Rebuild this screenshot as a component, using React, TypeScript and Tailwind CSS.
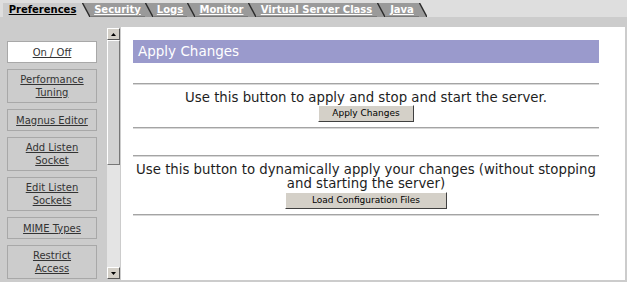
const tabs = [
  { label: "Preferences", width: 79, z: "z-60", active: true },
  { label: "Security", width: 63, z: "z-50", active: false },
  { label: "Logs", width: 42, z: "z-40", active: false },
  { label: "Monitor", width: 61, z: "z-30", active: false },
  { label: "Virtual Server Class", width: 129, z: "z-20", active: false },
  { label: "Java", width: 42, z: "z-10", active: false },
];

const menu = [
  { label: ["On / Off"], selected: true },
  { label: ["Performance", "Tuning"] },
  { label: ["Magnus Editor"] },
  { label: ["Add Listen", "Socket"] },
  { label: ["Edit Listen", "Sockets"] },
  { label: ["MIME Types"] },
  { label: ["Restrict", "Access"] },
];

function Tab({
  label,
  width,
  z,
  active,
  first,
}: {
  label: string;
  width: number;
  z: string;
  active: boolean;
  first: boolean;
}) {
  const fill = active ? "#cccccc" : "#9a9a9a";
  return (
    <div className={`relative ${z} flex h-[14px] ${first ? "" : "-ml-[8px]"}`}>
      <div
        className={`flex h-full items-center justify-center text-[10px] font-bold underline leading-none ${
          active
            ? "bg-[#cccccc] text-black"
            : "bg-[#9a9a9a] text-white border-b border-[#7a7a7a]"
        } ${first ? "" : "pl-[8px]"}`}
        style={{ width }}
      >
        {label}
      </div>
      <svg width="8" height="14" viewBox="0 0 8 14" className="block">
        <polygon points="0,0 0.5,0 8,14 0,14" fill={fill} />
        <line x1="0.5" y1="0" x2="8" y2="14" stroke="#2a2a2a" strokeWidth="1.4" />
      </svg>
    </div>
  );
}

function Rule() {
  return <div className="h-[2px] bg-[#a4a4a4] border-b border-[#d8d8d8]" />;
}

function Button({ label, width }: { label: string; width: number }) {
  return (
    <div className="flex justify-center">
      <div
        className="h-[17px] flex items-center justify-center bg-[#d4d0c8] border border-t-white border-l-white border-r-[#404040] border-b-[#404040] text-[9px] text-black leading-none"
        style={{ width }}
      >
        {label}
      </div>
    </div>
  );
}

export default function App() {
  return (
    <div
      className="w-[627px] h-[282px] overflow-hidden bg-[#cccccc] flex flex-col"
      style={{ fontFamily: '"DejaVu Sans", Verdana, sans-serif' }}
    >
      {/* tab strip */}
      <div className="h-[17px] bg-[#dedede] flex items-end pl-[3px]">
        {tabs.map((t, i) => (
          <Tab key={t.label} {...t} first={i === 0} />
        ))}
      </div>

      <div className="flex-1 flex pt-[10px] pb-[2px] pr-[2px]">
        {/* left menu */}
        <div className="w-[107px] flex flex-col gap-[6px] pl-[7px] pt-[14px]">
          {menu.map((m) => (
            <div
              key={m.label.join(" ")}
              className={`w-[90px] ${
                m.label.length > 1 ? "h-[34px]" : "h-[22px]"
              } flex flex-col items-center justify-center border border-[#a8a8a8] text-[10px] leading-[13px] text-[#333] underline ${
                m.selected ? "bg-white" : "bg-[#cccccc]"
              }`}
            >
              {m.label.map((l) => (
                <span key={l}>{l}</span>
              ))}
            </div>
          ))}
        </div>

        {/* scrollbar */}
        <div className="w-[13px] flex flex-col pt-[1px] pb-[1px]">
          <div className="h-[12px] bg-[#d4d0c8] border border-t-white border-l-white border-r-[#555] border-b-[#555] flex items-center justify-center">
            <svg width="5" height="3" viewBox="0 0 5 3">
              <polygon points="2.5,0 5,3 0,3" fill="#000" />
            </svg>
          </div>
          <div className="h-[125px] bg-[#d2d2d2] border border-t-white border-l-white border-r-[#777] border-b-[#777]" />
          <div className="flex-1 bg-[#e4e4e4]" />
          <div className="h-[12px] bg-[#d4d0c8] border border-t-white border-l-white border-r-[#555] border-b-[#555] flex items-center justify-center">
            <svg width="5" height="3" viewBox="0 0 5 3">
              <polygon points="0,0 5,0 2.5,3" fill="#000" />
            </svg>
          </div>
        </div>

        {/* main frame */}
        <div className="ml-[1px] flex-1 bg-white pl-[12px] pr-[26px] pt-[13px] text-[#1e1e1e]">
          <div className="h-[23px] bg-[#9a9acc] text-white text-[13.5px] flex items-center pl-[5px]">
            Apply Changes
          </div>

          <div className="mt-[20px]">
            <Rule />
          </div>
          <div className="pt-[6px] text-center text-[13.3px] leading-[14px]">
            Use this button to apply and stop and start the server.
          </div>
          <Button label="Apply Changes" width={96} />
          <div className="mt-[5px]">
            <Rule />
          </div>

          <div className="mt-[26px]">
            <Rule />
          </div>
          <div className="pt-[6px] text-center text-[13.3px] leading-[14px]">
            Use this button to dynamically apply your changes (without stopping
            <br />
            and starting the server)
          </div>
          <div className="mt-[1px]">
            <Button label="Load Configuration Files" width={162} />
          </div>
          <div className="mt-[5px]">
            <Rule />
          </div>
        </div>
      </div>
    </div>
  );
}
